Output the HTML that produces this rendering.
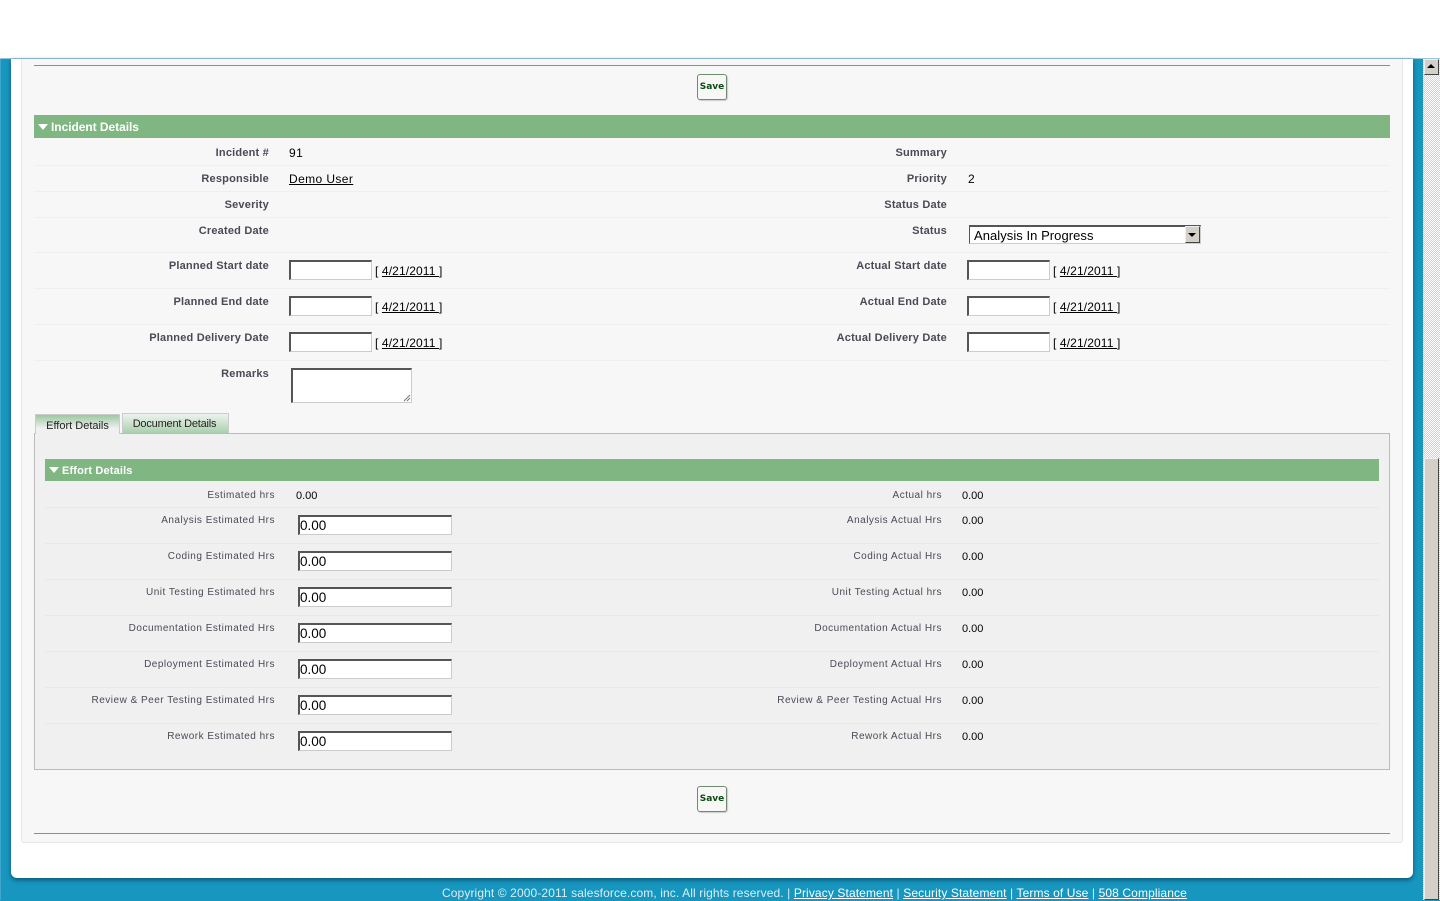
<!DOCTYPE html>
<html><head><meta charset="utf-8"><title>Incident Details</title>
<style>
html,body{margin:0;padding:0;width:1440px;height:900px;overflow:hidden;background:#1796bf;font-family:"Liberation Sans",Arial,sans-serif}
div,a,span,input,textarea{position:absolute;box-sizing:border-box}
a{position:static;color:#000;text-decoration:underline}
.l{font-weight:bold;font-size:11px;letter-spacing:.2px;color:#4a4a56;text-align:right;line-height:14px;white-space:nowrap;margin-top:1px}
.a{left:0;width:269px}.b{left:0;width:947px}
.v{font-size:12px;letter-spacing:.4px;color:#000;line-height:14px;white-space:nowrap}
.d{letter-spacing:.12px}
.r{left:34px;width:1356px;height:1px;background:#efefef}
.i{width:83px;height:24px;background:#fff;border:1px solid;border-color:#555 #ccc #ccc #555;border-top-width:2px;border-left-width:2px}
.h{background:#80b682;color:#fff;font-weight:bold;white-space:nowrap}
.tri{width:0;height:0;border-left:5px solid transparent;border-right:5px solid transparent;border-top:6px solid #fff}
.e{font-size:10px;letter-spacing:.5px;color:#4a4a56;text-align:right;line-height:14px;white-space:nowrap;margin-top:2px}
.ea{left:0;width:275px}.eb{left:0;width:942px}
.ev{font-size:11px;color:#000;line-height:14px;white-space:nowrap;left:962px;margin-top:1px}
.n{left:298px;width:154px;height:20px;background:#fff;border:1px solid;border-color:#555 #ccc #ccc #555;border-top-width:2px;border-left-width:2px;font-size:13.5px;line-height:17px;padding-left:0;color:#000}
.er{left:45px;width:1334px;height:1px;background:#e9e9e9}
.s{left:697px;width:30px;height:26px;background:#f7f8f5;border:1px solid #6f8a6f;border-radius:3px;color:#0b4a12;font:bold 9px/25px "DejaVu Sans",sans-serif;text-align:center;box-shadow:1px 1px 1px #ccc}
</style></head><body>
<div style="left:0;top:0;width:1440px;height:59px;background:#fff;border-bottom:1px solid #9cc4de"></div>
<div style="left:0;top:59px;width:1px;height:841px;background:#3fa7c9"></div>
<div style="left:11px;top:59px;width:1402px;height:819px;background:#fff;border-radius:0 0 6px 6px;box-shadow:0 2px 5px #0b5570"></div>
<div style="left:21px;top:59px;width:1382px;height:784px;background:#f7f7f7;border:1px solid #e7e7e7;border-top:0;border-radius:0 0 3px 3px"></div>
<div style="left:1423px;top:59px;width:17px;height:841px;background:repeating-conic-gradient(#d4d0c8 0 25%,#fff 0 50%) 0 0/2px 2px"></div>
<div style="left:1424px;top:59px;width:15px;height:16px;background:#d4d0c8;border:1px solid;border-color:#eee #444 #444 #eee"></div>
<div style="left:1427px;top:64px;width:0;height:0;border-left:4px solid transparent;border-right:4px solid transparent;border-bottom:4px solid #000"></div>
<div style="left:1424px;top:458px;width:15px;height:442px;background:#d4d0c8;border:1px solid;border-color:#eee #444 #444 #eee"></div>

<div style="left:34px;top:65px;width:1356px;height:1px;background:#8c8c8c"></div>
<div class="s" style="top:74px">Save</div>

<div class="h" style="left:34px;top:115px;width:1356px;height:23px;font-size:12px;line-height:24px;padding-left:17px;letter-spacing:-.05px">Incident Details</div>
<div class="tri" style="left:38px;top:124px"></div>

<div class="r" style="top:165px"></div><div class="r" style="top:191px"></div><div class="r" style="top:217px"></div><div class="r" style="top:252px"></div><div class="r" style="top:288px"></div><div class="r" style="top:324px"></div><div class="r" style="top:360px"></div>

<div class="l a" style="top:145px">Incident #</div><div class="v" style="left:289px;top:146px">91</div>
<div class="l b" style="top:145px">Summary</div>
<div class="l a" style="top:171px">Responsible</div><div class="v" style="left:289px;top:172px"><a href="#">Demo User</a></div>
<div class="l b" style="top:171px">Priority</div><div class="v" style="left:968px;top:172px">2</div>
<div class="l a" style="top:197px">Severity</div><div class="l b" style="top:197px">Status Date</div>
<div class="l a" style="top:223px">Created Date</div><div class="l b" style="top:223px">Status</div>

<div style="left:969px;top:225px;width:232px;height:19px;background:#fff;border:1px solid;border-color:#555 #ccc #ccc #555;border-top-width:2px"></div>
<div class="v" style="left:974px;top:229px;font-size:13px;letter-spacing:.05px">Analysis In Progress</div>
<div style="left:1185px;top:226px;width:15px;height:17px;background:#d4d0c8;border:1px solid;border-color:#eee #444 #444 #eee"></div>
<div style="left:1188px;top:233px;width:0;height:0;border-left:4px solid transparent;border-right:4px solid transparent;border-top:4px solid #000"></div>

<div class="l a" style="top:258px">Planned Start date</div><div class="i" style="left:289px;top:260px;height:20px"></div><div class="v d" style="left:375px;top:264px">[ <a href="#">4/21/2011 </a>]</div>
<div class="l b" style="top:258px">Actual Start date</div><div class="i" style="left:967px;top:260px;height:20px"></div><div class="v d" style="left:1053px;top:264px">[ <a href="#">4/21/2011 </a>]</div>
<div class="l a" style="top:294px">Planned End date</div><div class="i" style="left:289px;top:296px;height:20px"></div><div class="v d" style="left:375px;top:300px">[ <a href="#">4/21/2011 </a>]</div>
<div class="l b" style="top:294px">Actual End Date</div><div class="i" style="left:967px;top:296px;height:20px"></div><div class="v d" style="left:1053px;top:300px">[ <a href="#">4/21/2011 </a>]</div>
<div class="l a" style="top:330px">Planned Delivery Date</div><div class="i" style="left:289px;top:332px;height:20px"></div><div class="v d" style="left:375px;top:336px">[ <a href="#">4/21/2011 </a>]</div>
<div class="l b" style="top:330px">Actual Delivery Date</div><div class="i" style="left:967px;top:332px;height:20px"></div><div class="v d" style="left:1053px;top:336px">[ <a href="#">4/21/2011 </a>]</div>
<div class="l a" style="top:366px">Remarks</div>
<div class="i" style="left:291px;top:368px;width:121px;height:35px"></div>
<svg style="position:absolute;left:403px;top:394px" width="8" height="8"><path d="M1 7L7 1M4 7L7 4" stroke="#777" fill="none"/></svg>

<div style="left:34px;top:433px;width:1356px;height:337px;background:#f0f0f0;border:1px solid #bbb"></div>
<div style="left:35px;top:414px;width:85px;height:20px;background:linear-gradient(#9cc8a0,#f0f0f0 70%);border:1px solid #ccc;border-bottom:0;font-size:11px;line-height:22px;text-align:center;color:#222">Effort Details</div>
<div style="left:122px;top:413px;width:107px;height:20px;background:linear-gradient(#eef3ee,#a9cfad);border:1px solid #ccc;border-bottom:0;font-size:11px;letter-spacing:-.2px;line-height:21px;padding-right:2px;text-align:center;color:#222">Document Details</div>

<div class="h" style="left:45px;top:459px;width:1334px;height:22px;font-size:11px;letter-spacing:.15px;line-height:24px;padding-left:17px">Effort Details</div>
<div class="tri" style="left:49px;top:467px"></div>

<div class="er" style="top:507px"></div><div class="er" style="top:543px"></div><div class="er" style="top:579px"></div><div class="er" style="top:615px"></div><div class="er" style="top:651px"></div><div class="er" style="top:687px"></div><div class="er" style="top:723px"></div>

<div class="e ea" style="top:487px">Estimated hrs</div><div class="ev" style="left:296px;top:488px">0.00</div>
<div class="e eb" style="top:487px">Actual hrs</div><div class="ev" style="top:488px">0.00</div>

<div class="e ea" style="top:512px">Analysis Estimated Hrs</div><div class="n" style="top:515px">0.00</div>
<div class="e eb" style="top:512px">Analysis Actual Hrs</div><div class="ev" style="top:513px">0.00</div>
<div class="e ea" style="top:548px">Coding Estimated Hrs</div><div class="n" style="top:551px">0.00</div>
<div class="e eb" style="top:548px">Coding Actual Hrs</div><div class="ev" style="top:549px">0.00</div>
<div class="e ea" style="top:584px">Unit Testing Estimated hrs</div><div class="n" style="top:587px">0.00</div>
<div class="e eb" style="top:584px">Unit Testing Actual hrs</div><div class="ev" style="top:585px">0.00</div>
<div class="e ea" style="top:620px">Documentation Estimated Hrs</div><div class="n" style="top:623px">0.00</div>
<div class="e eb" style="top:620px">Documentation Actual Hrs</div><div class="ev" style="top:621px">0.00</div>
<div class="e ea" style="top:656px">Deployment Estimated Hrs</div><div class="n" style="top:659px">0.00</div>
<div class="e eb" style="top:656px">Deployment Actual Hrs</div><div class="ev" style="top:657px">0.00</div>
<div class="e ea" style="top:692px">Review &amp; Peer Testing Estimated Hrs</div><div class="n" style="top:695px">0.00</div>
<div class="e eb" style="top:692px">Review &amp; Peer Testing Actual Hrs</div><div class="ev" style="top:693px">0.00</div>
<div class="e ea" style="top:728px">Rework Estimated hrs</div><div class="n" style="top:731px">0.00</div>
<div class="e eb" style="top:728px">Rework Actual Hrs</div><div class="ev" style="top:729px">0.00</div>

<div class="s" style="top:786px">Save</div>
<div style="left:34px;top:833px;width:1356px;height:1px;background:#8c8c8c"></div>

<div style="left:442px;top:886px;font-size:12px;letter-spacing:.11px;line-height:15px;color:#dceef5;white-space:nowrap">Copyright © 2000-2011 salesforce.com, inc. All rights reserved. | <a href="#" style="color:#fff">Privacy Statement</a> | <a href="#" style="color:#fff">Security Statement</a> | <a href="#" style="color:#fff">Terms of Use</a> | <a href="#" style="color:#fff">508 Compliance</a></div>
</body></html>
